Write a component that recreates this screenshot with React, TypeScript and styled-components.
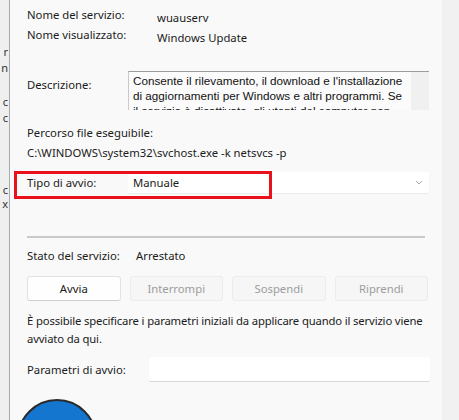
import styled, { createGlobalStyle } from 'styled-components';

const GlobalStyle = createGlobalStyle`
  html, body {
    margin: 0;
    padding: 0;
    width: 459px;
    height: 420px;
    overflow: hidden;
    background: #f9f9f9;
  }
  body {
    font-family: 'Noto Sans', 'Open Sans', sans-serif;
    font-size: 11.3px;
    line-height: 16px;
    color: #1b1b1b;
  }
`;

export default function App() {
  return (
    <>
      <GlobalStyle />
      <Window>
        <BackWindow>
          <Peek $top={44}>r</Peek>
          <Peek $top={60}>n</Peek>
          <Peek $top={94}>c</Peek>
          <Peek $top={110}>c</Peek>
          <Peek $top={182}>c</Peek>
          <Peek $top={196}>x</Peek>
        </BackWindow>
        <Panel>
          <InfoRow $top={7}>
            <Label>Nome del servizio:</Label>
            <Value>wuauserv</Value>
          </InfoRow>
          <InfoRow $top={1}>
            <Label>Nome visualizzato:</Label>
            <Value>Windows Update</Value>
          </InfoRow>

          <DescriptionRow>
            <DescriptionLabel>Descrizione:</DescriptionLabel>
            <Description>
              <DescriptionText>
                <Line>Consente il rilevamento, il download e l'installazione</Line>
                <Line>di aggiornamenti per Windows e altri programmi. Se</Line>
                <Line>il servizio è disattivato, gli utenti del computer non</Line>
              </DescriptionText>
              <Scrollbar />
            </Description>
          </DescriptionRow>

          <PathLabel>Percorso file eseguibile:</PathLabel>
          <PathValue>C:\WINDOWS\system32\svchost.exe -k netsvcs -p</PathValue>

          <StartupRow>
            <FieldLabel>Tipo di avvio:</FieldLabel>
            <Select>
              <span>Manuale</span>
              <Chevron viewBox="0 0 8 5" width="8" height="5">
                <path d="M1 1l3 3 3-3" fill="none" stroke="#a8a8a8" strokeWidth="1" />
              </Chevron>
            </Select>
            <Highlight />
          </StartupRow>

          <Separator />

          <StatusRow>
            <Label>Stato del servizio:</Label>
            <StatusValue>Arrestato</StatusValue>
          </StatusRow>

          <Buttons>
            <Button>Avvia</Button>
            <Button disabled>Interrompi</Button>
            <Button disabled>Sospendi</Button>
            <Button disabled>Riprendi</Button>
          </Buttons>

          <Hint>
            È possibile specificare i parametri iniziali da applicare quando il servizio viene
            <br />
            avviato da qui.
          </Hint>

          <ParamRow>
            <ParamLabel>Parametri di avvio:</ParamLabel>
            <Input />
          </ParamRow>

          <Avatar />
        </Panel>
        <RightEdge />
      </Window>
    </>
  );
}

const Window = styled.div`
  display: flex;
  width: 459px;
  height: 420px;
  overflow: hidden;
`;

const BackWindow = styled.div`
  position: relative;
  flex: 0 0 9px;
  background: #efefef;
  border-right: 1px solid #a9a9a9;
  overflow: hidden;
`;

const Peek = styled.span<{ $top: number }>`
  position: absolute;
  right: 1px;
  top: ${(p) => p.$top}px;
  font-size: 11px;
  color: #333;
`;

const Panel = styled.div`
  flex: 1;
  display: flex;
  flex-direction: column;
  padding: 0 12px 0 17px;
  background: #f9f9f9;
`;

const RightEdge = styled.div`
  flex: 0 0 19px;
  background: #f1f1f1;
`;

const InfoRow = styled.div<{ $top: number }>`
  display: flex;
  align-items: flex-start;
  height: 19px;
  margin-top: ${(p) => p.$top}px;
`;

const Label = styled.div`
  width: 130px;
  flex-shrink: 0;
`;

const Value = styled.div`
  padding-top: 3px;
`;

const DescriptionRow = styled.div`
  display: flex;
  align-items: flex-start;
  margin-top: 25px;
`;

const FieldLabel = styled.div`
  width: 101px;
  flex-shrink: 0;
`;

const DescriptionLabel = styled(FieldLabel)`
  padding-top: 6px;
`;

const Description = styled.div`
  display: flex;
  width: 301px;
  height: 39px;
  box-sizing: border-box;
  border-top: 1px solid #9c9c9c;
  border-left: 1px solid #c9c9c9;
  background: #fbfbfb;
  overflow: hidden;
`;

const DescriptionText = styled.div`
  flex: 1;
  padding: 1px 0 0 4px;
  font-family: 'Liberation Sans', Arial, sans-serif;
  font-size: 11.7px;
  line-height: 15px;
  color: #111;
`;

const Line = styled.div`
  white-space: nowrap;
`;

const Scrollbar = styled.div`
  flex: 0 0 18px;
  background: #f0f0f0;
`;

const PathLabel = styled.div`
  margin-top: 15px;
`;

const PathValue = styled.div`
  margin-top: 4px;
`;

const StartupRow = styled.div`
  position: relative;
  display: flex;
  align-items: center;
  margin-top: 11px;
`;

const Select = styled.div`
  flex: 0 0 301px;
  height: 21px;
  display: flex;
  align-items: center;
  justify-content: space-between;
  padding: 0 6px 0 5px;
  box-sizing: border-box;
  background: #fff;
  border-radius: 2px;
  box-shadow: 0 1px 1px rgba(0, 0, 0, 0.06);
`;

const Chevron = styled.svg`
  display: block;
`;

const Highlight = styled.div`
  position: absolute;
  left: -13px;
  top: -1px;
  width: 258px;
  height: 28px;
  border: 3px solid #e8111c;
  box-sizing: border-box;
`;

const Separator = styled.div`
  height: 0;
  margin: 43px 5px 0 0;
  border-top: 2px solid #c9c9c9;
`;

const StatusRow = styled.div`
  display: flex;
  margin-top: 10px;
`;

const StatusValue = styled.div`
  margin-left: -21px;
`;

const Buttons = styled.div`
  display: grid;
  grid-template-columns: repeat(4, 1fr);
  gap: 9px;
  width: 401px;
  margin-top: 12px;
`;

const Button = styled.button`
  height: 25px;
  font-family: inherit;
  font-size: 11.3px;
  color: #1b1b1b;
  background: #fefefe;
  border: 1px solid #e2e2e2;
  border-bottom-color: #cfcfcf;
  border-radius: 3px;
  padding: 0;

  &:disabled {
    color: #9d9d9d;
    background: #f6f6f6;
    border-color: #ececec;
  }
`;

const Hint = styled.p`
  margin: 11px 0 0;
  line-height: 18px;
  letter-spacing: -0.15px;
  white-space: nowrap;
`;

const ParamRow = styled.div`
  display: flex;
  align-items: center;
  margin-top: 9px;
`;

const ParamLabel = styled.div`
  width: 122px;
  flex-shrink: 0;
`;

const Input = styled.div`
  flex: 0 0 281px;
  height: 25px;
  box-sizing: border-box;
  background: #fff;
  border-radius: 2px;
  border-bottom: 1px solid #d7d7d7;
`;

const Avatar = styled.div`
  width: 80px;
  height: 80px;
  margin: 17px 0 0 -10px;
  flex-shrink: 0;
  box-sizing: border-box;
  border-radius: 50%;
  background: #1576cf;
  border: 2px solid #2a2a2a;
`;
